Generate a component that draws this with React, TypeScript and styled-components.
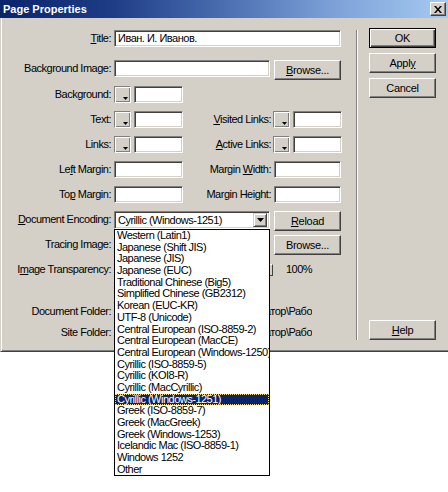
import React from "react";
import styled, { createGlobalStyle, css } from "styled-components";

const FONT = `"Liberation Sans", Arial, sans-serif`;

const Global = createGlobalStyle`
  html, body { margin: 0; padding: 0; background: #fff; }
  body { font-family: ${FONT}; font-size: 11px; letter-spacing: -0.5px; color: #000; }
  * { box-sizing: border-box; }
`;

const Page = styled.div`
  width: 448px;
  height: 492px;
  background: #fff;
`;

const Window = styled.div`
  width: 448px;
  height: 352px;
  display: flex;
  flex-direction: column;
  background: #d4d0c8;
`;

const TitleBar = styled.div`
  height: 18px;
  flex: none;
  display: flex;
  align-items: center;
  justify-content: space-between;
  padding: 0 2px 0 3px;
  background: linear-gradient(to right, #0a246a 0%, #1e3c86 25%, #4a6eb0 50%, #7ea2d8 75%, #a6caf0 100%);
`;

const TitleText = styled.span`
  font-weight: bold;
  font-size: 11px;
  letter-spacing: 0;
  color: #fff;
`;

const CloseButton = styled.button`
  width: 16px;
  height: 14px;
  padding: 0;
  display: flex;
  align-items: center;
  justify-content: center;
  background: #d4d0c8;
  border: 1px solid;
  border-color: #fff #404040 #404040 #fff;
  box-shadow: inset -1px -1px #808080;
`;

const Body = styled.div`
  flex: 1;
  display: flex;
  border-left: 1px solid #d4d0c8;
  border-bottom: 1px solid #404040;
  box-shadow: inset 1px 0 #fff, inset 0 -1px #808080;
`;

const FormPane = styled.div`
  width: 355px;
  flex: none;
  padding-top: 12px;
  display: flex;
  flex-direction: column;
`;

const Separator = styled.div`
  width: 2px;
  flex: none;
  margin-top: 12px;
  height: 310px;
  border-left: 1px solid #808080;
  border-right: 1px solid #fff;
`;

const ButtonPane = styled.div`
  flex: 1;
  padding: 10px 0 11px 11px;
  display: flex;
  flex-direction: column;
  gap: 5px;
`;

const Row = styled.div<{ $h: number }>`
  height: ${(p) => p.$h}px;
  flex: none;
  display: flex;
  align-items: flex-start;
`;

const Label = styled.label<{ $w?: number; $pr?: number }>`
  width: ${(p) => p.$w ?? 113}px;
  flex: none;
  padding-right: ${(p) => p.$pr ?? 3}px;
  text-align: right;
  line-height: 17px;
  white-space: nowrap;
`;

const Field = styled.div<{ $w: number; $h?: number }>`
  width: ${(p) => p.$w}px;
  height: ${(p) => p.$h ?? 17}px;
  flex: none;
  background: #fff;
  border: 1px solid;
  border-color: #808080 #fff #fff #808080;
  box-shadow: inset 1px 1px #404040, inset -1px -1px #d4d0c8;
  padding-left: 3px;
  line-height: 15px;
  white-space: nowrap;
  overflow: hidden;
`;

const Swatch = styled.div`
  width: 17px;
  height: 17px;
  flex: none;
  margin-right: 3px;
  display: flex;
  align-items: flex-end;
  justify-content: flex-end;
  padding: 0 2px 2px 0;
  border: 1px solid;
  border-color: #808080 #fff #fff #808080;
  box-shadow: inset 1px 1px #fff, inset -1px -1px #808080;
`;

const WinButton = styled.button<{ $default?: boolean; $mt?: number }>`
  width: 67px;
  height: 20px;
  flex: none;
  margin-top: ${(p) => p.$mt ?? 0}px;
  padding: 0;
  font-family: ${FONT};
  font-size: 11px;
  letter-spacing: -0.3px;
  color: #000;
  background: #d4d0c8;
  border: 1px solid;
  border-color: #fff #404040 #404040 #fff;
  box-shadow: inset -1px -1px #808080, inset 1px 1px #d4d0c8;
  ${(p) =>
    p.$default &&
    css`
      border-color: #000;
      box-shadow: inset 1px 1px #fff, inset -1px -1px #404040, inset -2px -2px #808080;
    `}
`;

const SideGap = styled.div`
  width: 4px;
  flex: none;
`;

const SelectWrap = styled.div`
  position: relative;
  width: 156px;
  flex: none;
`;

const SelectBox = styled(Field)`
  display: flex;
  align-items: center;
  justify-content: space-between;
  padding-right: 2px;
`;

const ArrowButton = styled.div`
  width: 14px;
  height: 14px;
  flex: none;
  display: flex;
  align-items: center;
  justify-content: center;
  background: #d4d0c8;
  border: 1px solid;
  border-color: #d4d0c8 #404040 #404040 #d4d0c8;
  box-shadow: inset 1px 1px #fff, inset -1px -1px #808080;
`;

const DropList = styled.ul`
  position: absolute;
  top: 18px;
  left: 0;
  width: 156px;
  margin: 0;
  padding: 0;
  list-style: none;
  background: #fff;
  border: 1px solid #000;
  z-index: 5;
`;

const DropItem = styled.li<{ $active?: boolean }>`
  height: 11.7px;
  line-height: 11.7px;
  padding-left: 2px;
  white-space: nowrap;
  overflow: hidden;
  ${(p) =>
    p.$active &&
    css`
      background: #0a246a;
      color: #fff;
      outline: 1px dotted #f2d878;
      outline-offset: -1px;
    `}
`;

const SliderBox = styled.div`
  width: 159px;
  height: 17px;
  flex: none;
  display: flex;
  align-items: center;
  justify-content: flex-end;
`;

const SliderThumb = styled.div`
  width: 8px;
  height: 12px;
  background: #d4d0c8;
  border: 1px solid;
  border-color: #fff #404040 #404040 #fff;
`;

const Percent = styled.span`
  margin-left: 13px;
  line-height: 17px;
`;

const Spacer = styled.div<{ $h: number }>`
  height: ${(p) => p.$h}px;
  flex: none;
`;

const PathText = styled.div`
  width: 198px;
  flex: none;
  display: flex;
  justify-content: flex-end;
  overflow: hidden;
  line-height: 17px;
  white-space: nowrap;
`;

const HelpSlot = styled.div`
  margin-top: auto;
`;

const U = styled.span`
  text-decoration: underline;
`;

const SwatchArrow = () => (
  <svg width="5" height="3" viewBox="0 0 5 3">
    <path d="M0 0h5L2.5 3z" fill="#000" />
  </svg>
);

const encodings = [
  "Western (Latin1)",
  "Japanese (Shift JIS)",
  "Japanese (JIS)",
  "Japanese (EUC)",
  "Traditional Chinese (Big5)",
  "Simplified Chinese (GB2312)",
  "Korean (EUC-KR)",
  "UTF-8 (Unicode)",
  "Central European (ISO-8859-2)",
  "Central European (MacCE)",
  "Central European (Windows-1250)",
  "Cyrillic (ISO-8859-5)",
  "Cyrillic (KOI8-R)",
  "Cyrillic (MacCyrillic)",
  "Cyrillic (Windows-1251)",
  "Greek (ISO-8859-7)",
  "Greek (MacGreek)",
  "Greek (Windows-1253)",
  "Icelandic Mac (ISO-8859-1)",
  "Windows 1252",
  "Other",
];

export default function App() {
  return (
    <Page>
      <Global />
      <Window>
        <TitleBar>
          <TitleText>Page Properties</TitleText>
          <CloseButton aria-label="Close">
            <svg width="8" height="7" viewBox="0 0 8 7">
              <path d="M0 0h2l2 2.5L6 0h2L5 3.5 8 7H6L4 4.5 2 7H0l3-3.5z" fill="#000" />
            </svg>
          </CloseButton>
        </TitleBar>
        <Body>
          <FormPane>
            <Row $h={30}>
              <Label><U>T</U>itle:</Label>
              <Field $w={227}>Иван. И. Иванов.</Field>
            </Row>
            <Row $h={26}>
              <Label>Background Image:</Label>
              <Field $w={156} />
              <SideGap />
              <WinButton><U>B</U>rowse...</WinButton>
            </Row>
            <Row $h={25}>
              <Label>Background:</Label>
              <Swatch><SwatchArrow /></Swatch>
              <Field $w={49} />
            </Row>
            <Row $h={25}>
              <Label>Text:</Label>
              <Swatch><SwatchArrow /></Swatch>
              <Field $w={49} />
              <Label $w={90} $pr={2}><U>V</U>isited Links:</Label>
              <Swatch><SwatchArrow /></Swatch>
              <Field $w={49} />
            </Row>
            <Row $h={25}>
              <Label>Links:</Label>
              <Swatch><SwatchArrow /></Swatch>
              <Field $w={49} />
              <Label $w={90} $pr={2}><U>A</U>ctive Links:</Label>
              <Swatch><SwatchArrow /></Swatch>
              <Field $w={49} />
            </Row>
            <Row $h={25}>
              <Label>Le<U>f</U>t Margin:</Label>
              <Field $w={69} />
              <Label $w={91} $pr={3}>Margin <U>W</U>idth:</Label>
              <Field $w={67} />
            </Row>
            <Row $h={25}>
              <Label>To<U>p</U> Margin:</Label>
              <Field $w={69} />
              <Label $w={91} $pr={3}>Margin Height:</Label>
              <Field $w={67} />
            </Row>
            <Row $h={25}>
              <Label><U>D</U>ocument Encoding:</Label>
              <SelectWrap>
                <SelectBox $w={156} $h={18}>
                  <span>Cyrillic (Windows-1251)</span>
                  <ArrowButton>
                    <svg width="7" height="4" viewBox="0 0 7 4">
                      <path d="M0 0h7L3.5 4z" fill="#000" />
                    </svg>
                  </ArrowButton>
                </SelectBox>
                <DropList>
                  {encodings.map((e) => (
                    <DropItem key={e} $active={e === "Cyrillic (Windows-1251)"}>
                      {e}
                    </DropItem>
                  ))}
                </DropList>
              </SelectWrap>
              <SideGap />
              <WinButton><U>R</U>eload</WinButton>
            </Row>
            <Row $h={25}>
              <Label>Tracing Image:</Label>
              <Field $w={156} />
              <SideGap />
              <WinButton $mt={-1}>Browse...</WinButton>
            </Row>
            <Row $h={25}>
              <Label>I<U>m</U>age Transparency:</Label>
              <SliderBox>
                <SliderThumb />
              </SliderBox>
              <Percent>100%</Percent>
            </Row>
            <Spacer $h={17} />
            <Row $h={21}>
              <Label>Document Folder:</Label>
              <PathText>C:\Documents and Settings\Администратор\Рабо</PathText>
            </Row>
            <Row $h={21}>
              <Label>Site Folder:</Label>
              <PathText>C:\Documents and Settings\Администратор\Рабо</PathText>
            </Row>
          </FormPane>
          <Separator />
          <ButtonPane>
            <WinButton $default>OK</WinButton>
            <WinButton>Appl<U>y</U></WinButton>
            <WinButton>Cancel</WinButton>
            <HelpSlot>
              <WinButton><U>H</U>elp</WinButton>
            </HelpSlot>
          </ButtonPane>
        </Body>
      </Window>
    </Page>
  );
}
